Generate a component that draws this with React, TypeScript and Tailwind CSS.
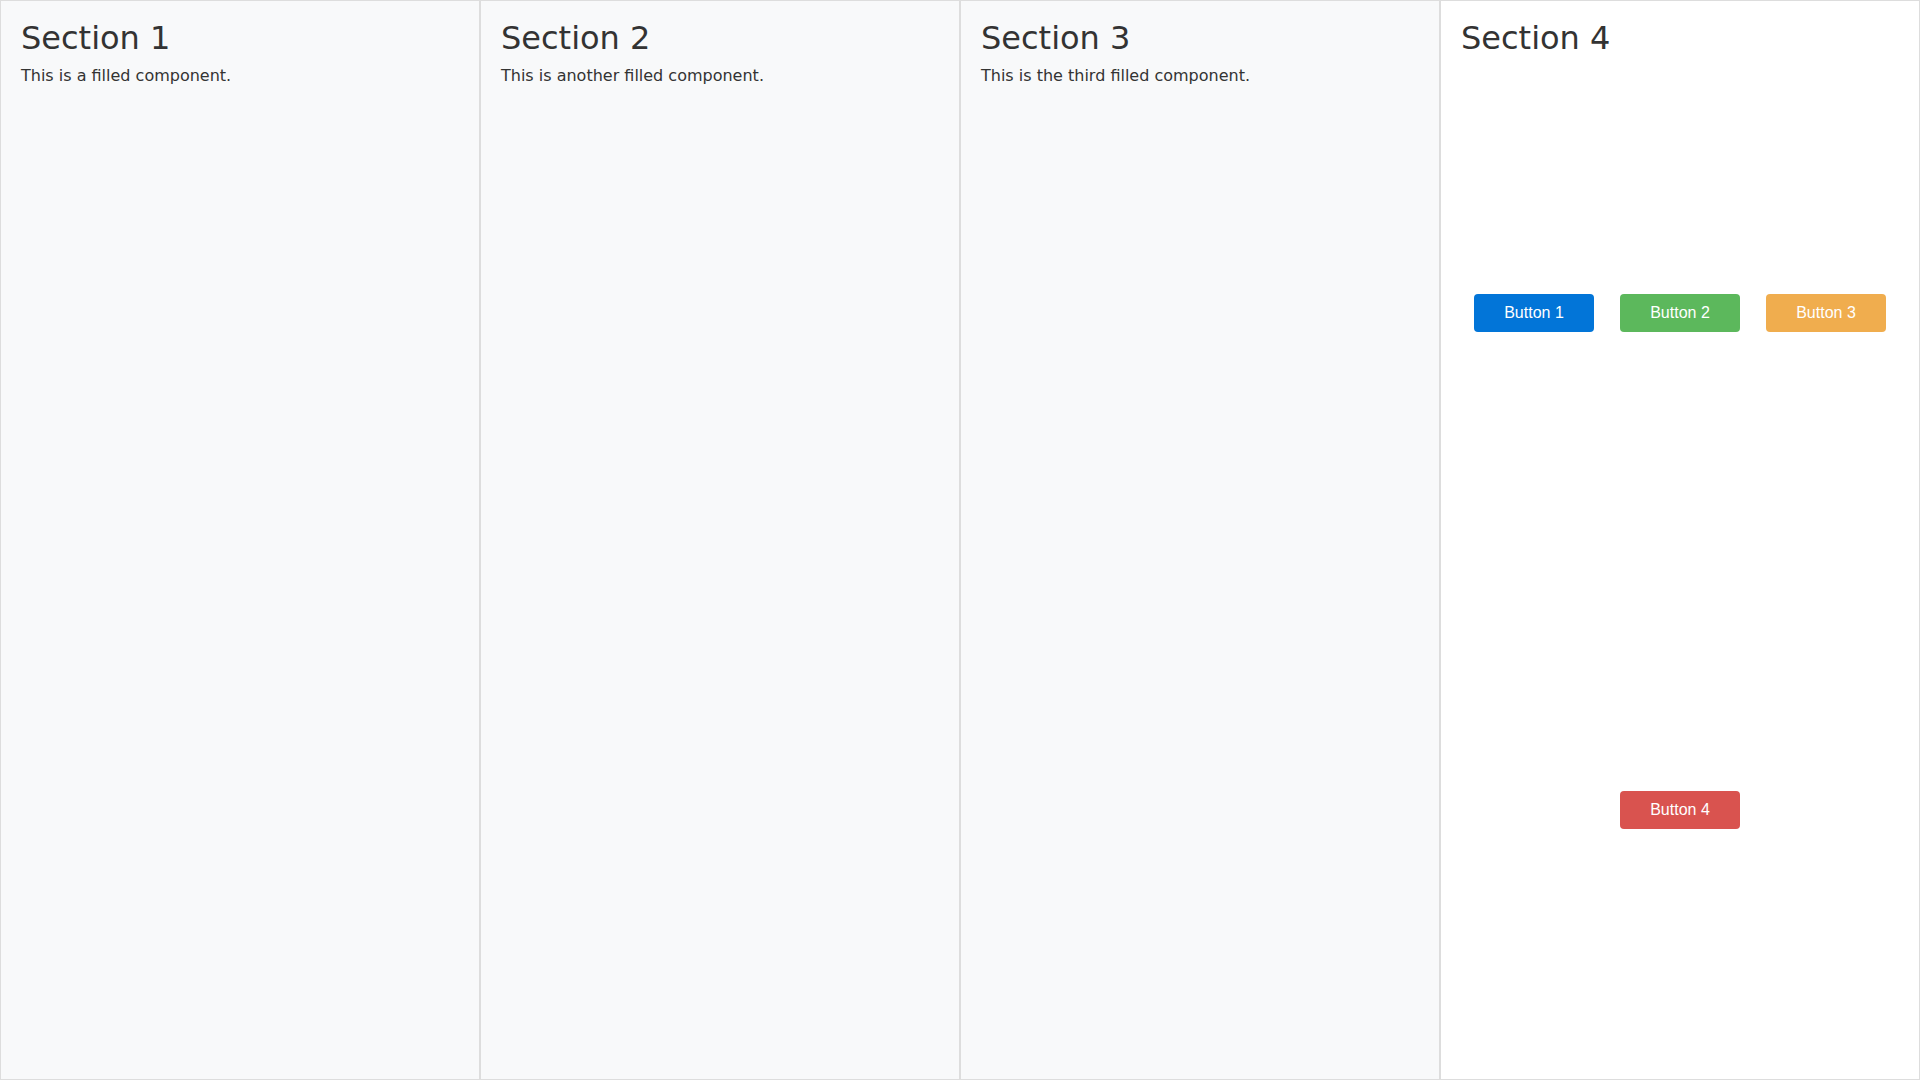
const filled = [
  { title: 'Section 1', text: 'This is a filled component.' },
  { title: 'Section 2', text: 'This is another filled component.' },
  { title: 'Section 3', text: 'This is the third filled component.' },
];

function Btn({ label, className }: { label: string; className: string }) {
  return (
    <button
      className={`h-[38px] w-[120px] rounded-[4px] text-[16px] text-white font-['Liberation_Sans',Arial,sans-serif] ${className}`}
    >
      {label}
    </button>
  );
}

export default function App() {
  return (
    <main className="flex h-screen w-full text-[#333] font-['DejaVu_Sans',sans-serif]">
      {filled.map((s) => (
        <section key={s.title} className="flex-1 border border-[#ddd] bg-[#f8f9fa] p-5">
          <h2 className="mb-[9px] text-[32px] leading-[34px]">{s.title}</h2>
          <p className="text-[16px] leading-6">{s.text}</p>
        </section>
      ))}

      <section className="flex flex-1 flex-col border border-[#ddd] bg-white p-5">
        <h2 className="mb-[9px] text-[32px] leading-[34px]">Section 4</h2>
        <div className="flex flex-1 flex-col">
          <div className="flex flex-1 items-center justify-around">
            <Btn label="Button 1" className="bg-[#0275d8]" />
            <Btn label="Button 2" className="bg-[#5cb85c]" />
            <Btn label="Button 3" className="bg-[#f0ad4e]" />
          </div>
          <div className="flex flex-1 items-center justify-center">
            <Btn label="Button 4" className="bg-[#d9534f]" />
          </div>
        </div>
      </section>
    </main>
  );
}
